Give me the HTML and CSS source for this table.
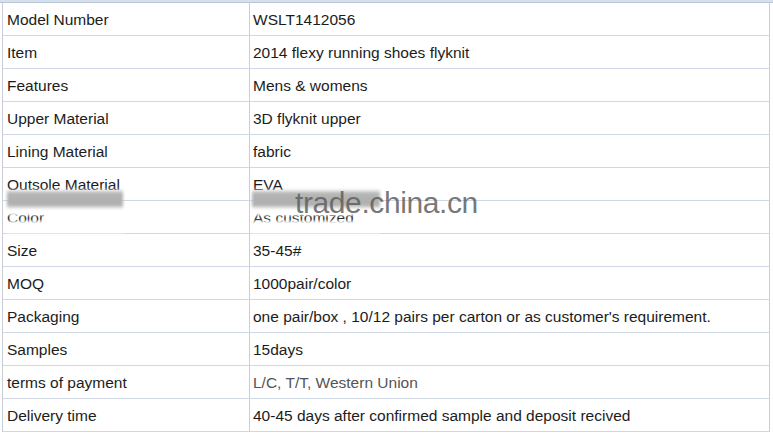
FILE: index.html
```html
<!DOCTYPE html>
<html lang="en">
<head>
  <meta charset="UTF-8">
  <meta name="viewport" content="width=device-width, initial-scale=1.0">
  <title>WSLT1412056 specification</title>
  <link rel="stylesheet" href="styles.css">
</head>
<body>
  <div class="sheet">
    <div class="sheet-top"></div>

    <div class="row"><div class="cell key">Model Number</div><div class="cell val">WSLT1412056</div></div>
    <div class="row"><div class="cell key">Item</div><div class="cell val">2014 flexy running shoes flyknit</div></div>
    <div class="row"><div class="cell key">Features</div><div class="cell val">Mens &amp; womens</div></div>
    <div class="row"><div class="cell key">Upper Material</div><div class="cell val">3D flyknit upper</div></div>
    <div class="row"><div class="cell key">Lining Material</div><div class="cell val">fabric</div></div>
    <div class="row"><div class="cell key">Outsole Material</div><div class="cell val">EVA</div></div>
    <div class="row"><div class="cell key">Color</div><div class="cell val">As customized</div></div>
    <div class="row"><div class="cell key">Size</div><div class="cell val">35-45#</div></div>
    <div class="row"><div class="cell key">MOQ</div><div class="cell val">1000pair/color</div></div>
    <div class="row"><div class="cell key">Packaging</div><div class="cell val">one pair/box , 10/12 pairs per carton or as customer's requirement.</div></div>
    <div class="row"><div class="cell key">Samples</div><div class="cell val">15days</div></div>
    <div class="row"><div class="cell key">terms of payment</div><div class="cell val muted">L/C, T/T, Western Union</div></div>
    <div class="row"><div class="cell key">Delivery time</div><div class="cell val">40-45 days after confirmed sample and deposit recived</div></div>
  </div>

  <!-- smudged area over the colour row -->
  <div class="smear smear-left"></div>
  <div class="smear smear-right"></div>
  <div class="watermark">trade.china.cn</div>
</body>
</html>
```

FILE: styles.css
```css
body {
  font-family: "Liberation Sans", Arial, sans-serif;
  background: #fff;
  margin: 0;
  position: relative;
  width: 773px;
  height: 434px;
  overflow: hidden;
}
.sheet-top {
  height: 2px;
  background: #d6e0ec;
  border-bottom: 1px solid #b8c6d8;
}
.row {
  display: grid;
  grid-template-columns: 247px 520px;
  margin-left: 2px;
  border-left: 1px solid #c9ced6;
}
.cell {
  height: 33px;
  box-sizing: border-box;
  padding-top: 2px;
  line-height: 30px;
  font-size: 15.5px;
  color: #1c1c1c;
  border-bottom: 1px solid #d0d7e5;
  border-right: 1px solid #c9ced6;
  white-space: nowrap;
  overflow: hidden;
}
.key {
  padding-left: 4px;
}
.val {
  padding-left: 3px;
}
.muted {
  color: #555;
}
.smear {
  position: absolute;
  top: 189px;
  height: 44px;
  background: linear-gradient(to bottom,
    rgba(255,255,255,0.5) 0,
    #b4b4b4 10%,
    #aeaeae 36%,
    #fff 46%,
    #fff 59%,
    rgba(255,255,255,0) 62%,
    rgba(255,255,255,0) 71%,
    #fff 74%,
    #fff 100%);
  filter: blur(1.5px);
}
.smear-left {
  left: 7px;
  width: 116px;
}
.smear-right {
  left: 252px;
  width: 128px;
}
.watermark {
  position: absolute;
  left: 295px;
  top: 186px;
  font-size: 30px;
  color: rgba(95,95,95,0.85);
  letter-spacing: -0.4px;
}
```
